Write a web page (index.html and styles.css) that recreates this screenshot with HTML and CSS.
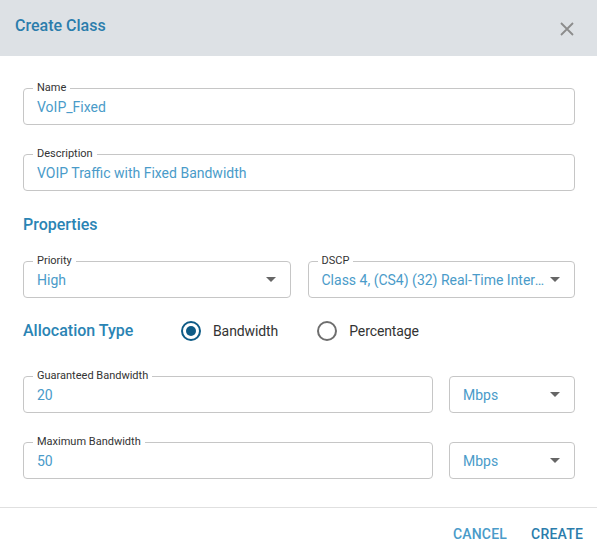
FILE: index.html
```html
<!DOCTYPE html>
<html>
<head>
<meta charset="utf-8">
<link rel="stylesheet" href="styles.css">
</head>
<body>
<div class="dialog">
  <div class="header">
    <div class="title">Create Class</div>
    <svg class="close" width="14" height="14" viewBox="0 0 14 14"><path d="M1 1 L13 13 M13 1 L1 13" stroke="#8c8c8c" stroke-width="1.8" fill="none"/></svg>
  </div>
  <div class="content">
    <div class="field f-name">
      <span class="label">Name</span>
      <span class="value">VoIP_Fixed</span>
    </div>
    <div class="field f-desc">
      <span class="label">Description</span>
      <span class="value">VOIP Traffic with Fixed Bandwidth</span>
    </div>
    <div class="section">Properties</div>
    <div class="row2">
      <div class="field select">
        <span class="label">Priority</span>
        <span class="value">High</span>
        <span class="arrow"></span>
      </div>
      <div class="field select">
        <span class="label">DSCP</span>
        <span class="value ellip">Class 4, (CS4) (32) Real-Time Interactive</span>
        <span class="arrow"></span>
      </div>
    </div>
    <div class="alloc">
      <div class="section inline">Allocation Type</div>
      <div class="radios">
        <label class="radio"><span class="ring on"><span class="dot"></span></span><span class="rtext">Bandwidth</span></label>
        <label class="radio"><span class="ring"></span><span class="rtext">Percentage</span></label>
      </div>
    </div>
    <div class="row-unit r-guar">
      <div class="field">
        <span class="label">Guaranteed Bandwidth</span>
        <span class="value">20</span>
      </div>
      <div class="field select">
        <span class="value">Mbps</span>
        <span class="arrow"></span>
      </div>
    </div>
    <div class="row-unit r-max">
      <div class="field">
        <span class="label">Maximum Bandwidth</span>
        <span class="value">50</span>
      </div>
      <div class="field select">
        <span class="value">Mbps</span>
        <span class="arrow"></span>
      </div>
    </div>
  </div>
  <div class="footer">
    <button class="btn cancel">CANCEL</button>
    <button class="btn create">CREATE</button>
  </div>
</div>
</body>
</html>
```

FILE: styles.css
```css
* { box-sizing: border-box; }
html, body { margin: 0; padding: 0; background: #fff; }
body { font-family: Roboto, "Noto Sans", Arial, sans-serif; width: 597px; height: 560px; overflow: hidden; }

.dialog { display: flex; flex-direction: column; width: 597px; }

.header {
  height: 56px;
  background: #dde1e5;
  display: flex;
  align-items: flex-start;
  justify-content: space-between;
  padding: 16px 23px 0 15px;
}
.title { font-size: 16px; font-weight: 500; color: #2b7dac; line-height: 20px; }
.close { margin-top: 6px; }

.content { padding: 32px 22px 0 23px; display: flex; flex-direction: column; }

.field {
  position: relative;
  height: 37px;
  border: 1px solid #c6c6c6;
  border-radius: 4px;
  display: flex;
  align-items: center;
  padding: 0 13px 0 13px;
  min-width: 0;
}
.label {
  position: absolute;
  left: 9px;
  top: -8px;
  padding: 0 4px;
  background: #fff;
  font-size: 11px;
  line-height: 14px;
  color: #333;
}
.value { font-size: 14px; color: #4a9bc9; white-space: nowrap; }
.ellip { overflow: hidden; text-overflow: ellipsis; flex: 1; min-width: 0; margin-right: 3px; }

.select { justify-content: space-between; }
.arrow {
  width: 0; height: 0;
  border-left: 5px solid transparent;
  border-right: 5px solid transparent;
  border-top: 5px solid #666;
  flex: none;
  margin-right: 1px;
}

.f-desc { margin-top: 29px; }

.section { font-size: 16px; font-weight: 500; color: #2a84b4; line-height: 24px; margin-top: 22px; }
.section.inline { margin-top: 0; width: 158px; }

.row2 { display: grid; grid-template-columns: minmax(0, 1fr) minmax(0, 1fr); column-gap: 17px; margin-top: 24px; }

.alloc { display: flex; align-items: center; height: 24px; margin-top: 21px; }
.radios { display: flex; align-items: center; gap: 39px; }
.radio { display: flex; align-items: center; gap: 12px; }
.ring {
  width: 20px; height: 20px;
  border: 2px solid #6e6e6e;
  border-radius: 50%;
  display: flex; align-items: center; justify-content: center;
}
.ring.on { border-color: #0e5b86; }
.dot { width: 10px; height: 10px; border-radius: 50%; background: #0e5b86; }
.rtext { font-size: 14px; color: #333; letter-spacing: -0.1px; }

.row-unit { display: grid; grid-template-columns: minmax(0, 1fr) 126px; column-gap: 16px; }
.r-guar { margin-top: 33px; }
.r-max { margin-top: 29px; }

.footer {
  margin-top: 28px;
  border-top: 1px solid #e0e0e0;
  height: 53px;
  display: flex;
  justify-content: flex-end;
  align-items: center;
  gap: 24px;
  padding: 0 14px 0 0;
}
.btn {
  background: none; border: none; padding: 0;
  font-family: Roboto, Arial, sans-serif;
  font-size: 14px; font-weight: 500;
  letter-spacing: 0.2px;
}
.cancel { color: #4a9bc9; }
.create { color: #2b7dac; }
```
